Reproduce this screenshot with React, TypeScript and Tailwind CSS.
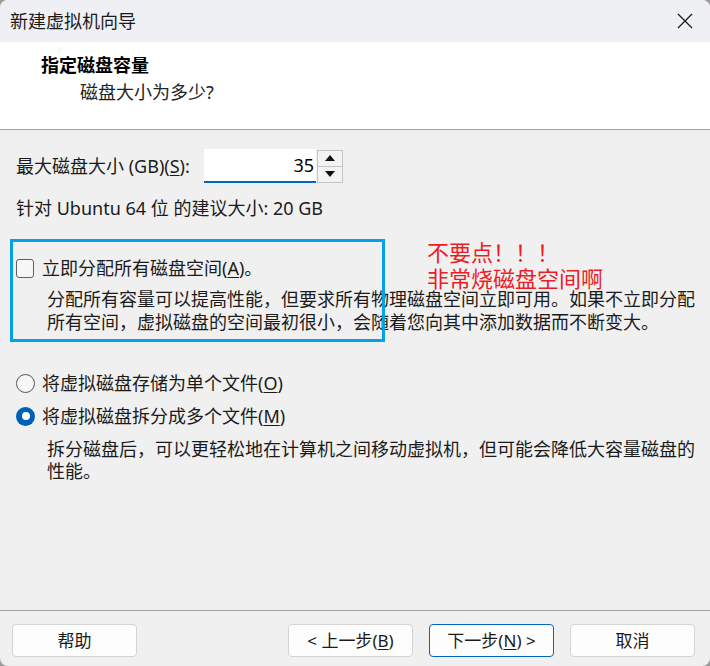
import React from "react";

const U = ({ c }: { c: string }) => <span className="underline underline-offset-2">{c}</span>;

function Btn({ children, primary }: { children: React.ReactNode; primary?: boolean }) {
  return (
    <div
      className={
        "w-[125px] h-[33px] flex items-center justify-center rounded-[4px] bg-[#fdfdfd] text-[17px] text-[#1a1a1a] " +
        (primary ? "border border-[#0067c0]" : "border border-[#d3d3d3]")
      }
    >
      {children}
    </div>
  );
}

export default function App() {
  return (
    <div
      className="w-[710px] h-[666px] bg-[#9c9c9c] overflow-hidden"
      style={{ fontFamily: '"Noto Sans", "Noto Sans CJK SC", sans-serif' }}
    >
      <div className="w-[710px] h-[666px] rounded-[8px] overflow-hidden bg-[#f0f0f0] flex flex-col relative">
        {/* title bar */}
        <div className="h-[42px] bg-[#eff0f4] flex items-center justify-between pl-[10px] pr-[16px]">
          <span className="text-[18px] text-[#1a1a1a]">新建虚拟机向导</span>
          <svg width="16" height="16" viewBox="0 0 16 16" className="mr-[1px]">
            <path d="M1 1 L15 15 M15 1 L1 15" stroke="#1a1a1a" strokeWidth="1.3" fill="none" />
          </svg>
        </div>
        {/* header */}
        <div className="h-[88px] bg-white border-b border-[#a0a0a0] pt-[11px]">
          <div className="pl-[41px] text-[18px] leading-[24px] font-bold text-black">指定磁盘容量</div>
          <div className="pl-[80px] mt-[3px] text-[18px] leading-[24px] text-[#222]">磁盘大小为多少?</div>
        </div>
        {/* body */}
        <div className="flex-1 relative px-[16px] text-[18px] text-[#1b1b1b]">
          <div className="mt-[19px] flex items-center h-[34px]">
            <div className="w-[188px] whitespace-nowrap">
              最大磁盘大小 (GB)(<U c="S" />):
            </div>
            <div className="w-[112px] h-[34px] bg-white border-b-2 border-[#0067c0] flex items-center justify-end pr-[2px] text-black">
              35
            </div>
            <div className="ml-[1px] w-[26px] h-[33px] border border-[#c4c4c4] bg-[#f3f3f3] flex flex-col">
              <div className="flex-1 flex items-center justify-center border-b border-[#c4c4c4]">
                <svg width="10" height="6" viewBox="0 0 10 6"><path d="M0 6 L5 0 L10 6 Z" fill="#111" /></svg>
              </div>
              <div className="flex-1 flex items-center justify-center">
                <svg width="10" height="6" viewBox="0 0 10 6"><path d="M0 0 L5 6 L10 0 Z" fill="#111" /></svg>
              </div>
            </div>
          </div>
          <div className="mt-[13px] leading-[24px] whitespace-nowrap">针对 Ubuntu 64 位 的建议大小: 20 GB</div>

          <div className="mt-[36px] flex items-center h-[24px]">
            <div className="w-[18px] h-[19px] border border-[#5f5f5f] rounded-[3px] bg-[#f7f7f7]" />
            <span className="ml-[8px] whitespace-nowrap">
              立即分配所有磁盘空间(<U c="A" />)。
            </span>
          </div>
          <div className="mt-[8px] pl-[31px] leading-[23px] whitespace-nowrap">
            <div>分配所有容量可以提高性能，但要求所有物理磁盘空间立即可用。如果不立即分配</div>
            <div>所有空间，虚拟磁盘的空间最初很小，会随着您向其中添加数据而不断变大。</div>
          </div>

          <div className="mt-[37px] flex items-center h-[24px]">
            <div className="w-[19px] h-[19px] rounded-full border border-[#555] bg-[#f7f7f7]" />
            <span className="ml-[7px] whitespace-nowrap">
              将虚拟磁盘存储为单个文件(<U c="O" />)
            </span>
          </div>
          <div className="mt-[9px] flex items-center h-[24px]">
            <div className="w-[19px] h-[19px] rounded-full bg-[#005fb8] flex items-center justify-center">
              <div className="w-[8px] h-[8px] rounded-full bg-white" />
            </div>
            <span className="ml-[7px] whitespace-nowrap">
              将虚拟磁盘拆分成多个文件(<U c="M" />)
            </span>
          </div>
          <div className="mt-[10px] pl-[31px] leading-[22px] whitespace-nowrap">
            <div>拆分磁盘后，可以更轻松地在计算机之间移动虚拟机，但可能会降低大容量磁盘的</div>
            <div>性能。</div>
          </div>

          {/* annotations */}
          <div className="absolute left-[10px] top-[109px] w-[375px] h-[103px] border-[3px] border-[#00a2e8]" />
          <div
            className="absolute left-[427px] top-[110px] text-[22px] leading-[22px] text-[#ee1c25] whitespace-nowrap flex flex-col gap-[4px]"
            style={{ fontFamily: '"Noto Sans CJK SC", sans-serif' }}
          >
            <div>不要点！！！</div>
            <div>非常烧磁盘空间啊</div>
          </div>
        </div>
        {/* footer */}
        <div className="h-[56px] border-t border-[#a0a0a0] pt-[13px] pl-[12px] pr-[15px] flex justify-between items-start">
          <Btn>帮助</Btn>
          <div className="flex gap-[16px]">
            <Btn>
              &lt; 上一步(<U c="B" />)
            </Btn>
            <Btn primary>
              下一步(<U c="N" />) &gt;
            </Btn>
            <Btn>取消</Btn>
          </div>
        </div>
      </div>
    </div>
  );
}
